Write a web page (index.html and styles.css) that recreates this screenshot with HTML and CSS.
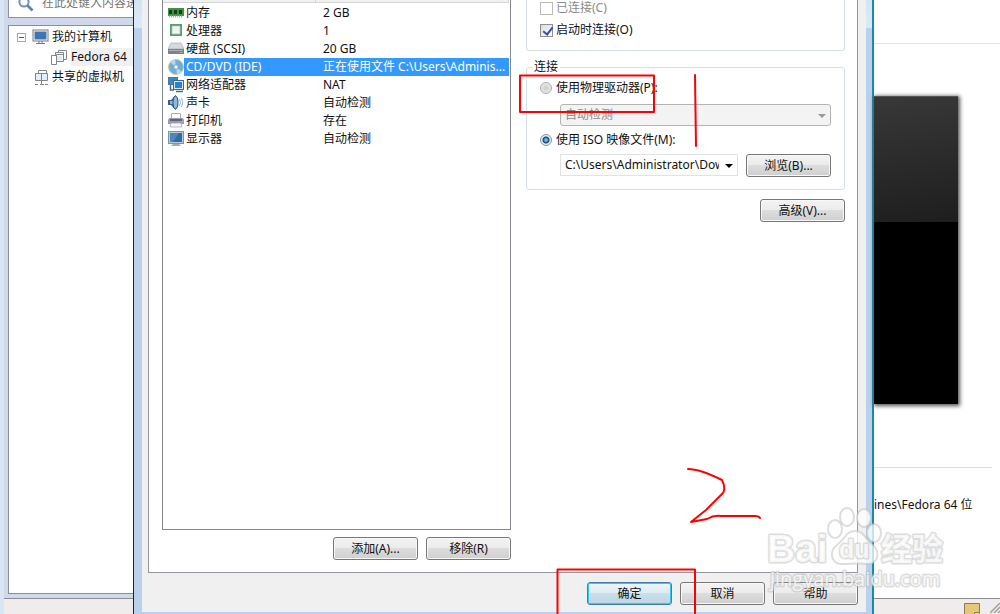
FILE: index.html
```html
<!DOCTYPE html>
<html lang="zh-CN">
<head>
<meta charset="utf-8">
<title>虚拟机设置</title>
<link rel="stylesheet" href="styles.css">
</head>
<body>
<div class="screen">
  <aside class="library">
    <div class="library-body">
      <label class="search">
        <svg width="16" height="16" viewBox="0 0 16 16"><circle cx="6" cy="5" r="4.6" fill="none" stroke="#6f94c4" stroke-width="2"/><path d="M9.500 8.500l5 5" stroke="#5b82b8" stroke-width="2.600"/></svg>
        <input type="text" placeholder="在此处键入内容进行搜索" aria-label="搜索">
      </label>
      <ul class="tree">
        <li class="node root">
          <svg width="9" height="9" viewBox="0 0 9 9"><rect x=".5" y=".5" width="8" height="8" fill="#fff" stroke="#a3a9b3"/><path d="M2 4.500h5" stroke="#3c5a96"/></svg>
          <svg width="17" height="16" viewBox="0 0 17 16"><rect x="1" y="1" width="15" height="11" fill="#fff" stroke="#777"/><rect x="2.500" y="2.500" width="12" height="8" fill="#3e76b5"/><path d="M7 12v2M10 12v2M4 14.500h9" stroke="#777" fill="none"/></svg>
          <span>我的计算机</span>
        </li>
        <li class="node child">
          <svg width="17" height="16" viewBox="0 0 17 16" fill="#fff" stroke="#858585"><path d="M7.500 1.500h8v9h-8z"/><path d="M4.500 3.500h8v9h-8z" fill="#f5f8fb"/><path d="M.5 6.500h5v9h-5z"/><path d="M5.500 12.500V5.500h7" fill="none"/><path d="M6 7h5v4H6z" fill="#dce9f6" stroke="none"/></svg>
          <span class="current">Fedora 64</span>
        </li>
        <li class="node shared">
          <svg width="15" height="17" viewBox="0 0 15 17" fill="#fff" stroke="#858585"><path d="M4.500 1.500h8v8h-8z"/><path d="M1.500 4.500h6v7h-6zM7.500 4.500h6v7h-6z" fill="#e6eff8"/><path d="M7.500 11v4M1 15.500h3M6 15.500h4M11 15.500h3" fill="none"/></svg>
          <span>共享的虚拟机</span>
        </li>
      </ul>
    </div>
    <div class="status"></div>
  </aside>

  <main class="dialog">
    <div class="dialog-face">
      <div class="page">
        <section class="devices">
          <div class="list">
            <div class="list-head"><i></i><i></i></div>
            <table>
              <tbody>
              <tr><td class="ico"><svg width="16" height="16" viewBox="0 0 16 16"><path d="M0 3h16v8H0z" fill="#3f9143"/><path d="M1 5h3v4H1zM6 5h3v4H6zM11 5h3v4h-3z" fill="#1c3b22"/><path d="M1 11.500h14" stroke="#c0b24d" stroke-width="2" stroke-dasharray="1 1"/></svg></td><td>内存</td><td>2 GB</td></tr>
              <tr><td class="ico"><svg width="16" height="16" viewBox="0 0 16 16"><rect x="2.500" y="1.500" width="11" height="11" fill="#238247" stroke="#55a071"/><rect x="4" y="3" width="8" height="8" fill="#f2f1f1" stroke="#ccd5cf"/></svg></td><td>处理器</td><td>1</td></tr>
              <tr><td class="ico"><svg width="16" height="16" viewBox="0 0 16 16"><path d="M3 2h10l3 6H0z" fill="#d6dadd" stroke="#999fa6" stroke-width=".6"/><path d="M0 8h16v5H0z" fill="#7b838c"/><path d="M1 9h14v1H1z" fill="#a9b1ba"/><path d="M12 11h2v1h-2z" fill="#7fe068"/></svg></td><td>硬盘 (SCSI)</td><td>20 GB</td></tr>
              <tr class="selected"><td class="ico"><svg width="16" height="16" viewBox="0 0 16 16"><circle cx="8" cy="8" r="7.500" fill="#73acd9" stroke="#b8d684"/><path d="M8 8L2 3a8 8 0 0 1 5-2.500zM8 8l6 5a8 8 0 0 1-5 2.500z" fill="#b4d8f0"/><circle cx="8" cy="8" r="2.300" fill="#dceaf3" stroke="#7ba9cf"/><circle cx="8" cy="8" r="1" fill="#fff"/></svg></td><td>CD/DVD (IDE)</td><td>正在使用文件 C:\Users\Adminis...</td></tr>
              <tr><td class="ico"><svg width="16" height="16" viewBox="0 0 16 16"><rect x=".5" y=".5" width="9" height="7" fill="#3789c8" stroke="#57758d"/><rect x="5.500" y="3.500" width="10" height="9" fill="#d9e5ef" stroke="#456783"/><rect x="7" y="5" width="7" height="6" fill="#2385d1"/><path d="M2.500 8v5H6M8 14.500h7" fill="none" stroke="#496d8c" stroke-width="1.500"/></svg></td><td>网络适配器</td><td>NAT</td></tr>
              <tr><td class="ico"><svg width="16" height="16" viewBox="0 0 16 16"><path d="M0 5h3l5-5v15l-5-5H0z" fill="#335f88"/><path d="M2 6h2l3-3v8l-3-2H2z" fill="#8bb9dd"/><ellipse cx="7.500" cy="7.500" rx="2.500" ry="6.500" fill="#8fbadb" stroke="#234d74"/><path d="M11.500 4q2 3.500 0 7M13.500 3q2.500 4.500 0 9" fill="none" stroke="#8bb6dc"/></svg></td><td>声卡</td><td>自动检测</td></tr>
              <tr><td class="ico"><svg width="16" height="16" viewBox="0 0 16 16"><path d="M3.500.5h9V6h-9z" fill="#fff" stroke="#aaa"/><path d="M1 5h14l1 2v4H0V7z" fill="#999daf"/><path d="M2 6h12v2H2z" fill="#60677d"/><path d="M3 10h10l1 4H2z" fill="#f7f7fc" stroke="#9b9fab" stroke-width=".7"/><path d="M13 8h2v1h-2z" fill="#7ee180"/></svg></td><td>打印机</td><td>存在</td></tr>
              <tr><td class="ico"><svg width="16" height="16" viewBox="0 0 16 16"><rect x=".5" y=".5" width="15" height="12" fill="#b9c9d6" stroke="#7d94a6"/><rect x="2" y="2" width="12" height="9" fill="#326ba6"/><path d="M2 2h9L5 11H2z" fill="#5088bb"/><path d="M5 13h6l2 2H3z" fill="#9aabb9"/></svg></td><td>显示器</td><td>自动检测</td></tr>
              </tbody>
            </table>
          </div>
          <div class="buttons">
            <button type="button">添加(A)...</button>
            <button type="button">移除(R)</button>
          </div>
        </section>

        <section class="settings">
          <div class="group state">
            <label class="option off"><input type="checkbox" disabled><span>已连接(C)</span></label>
            <label class="option"><input type="checkbox" checked><span>启动时连接(O)</span></label>
          </div>
          <fieldset class="group link">
            <legend>连接</legend>
            <label class="option"><input type="radio" name="source"><span>使用物理驱动器(P):</span></label>
            <div class="combo off"><select disabled aria-label="物理驱动器"><option>自动检测</option></select></div>
            <label class="option"><input type="radio" name="source" checked><span>使用 ISO 映像文件(M):</span></label>
            <div class="file">
              <div class="combo"><select aria-label="ISO 映像文件"><option>C:\Users\Administrator\Downloads</option></select></div>
              <button type="button">浏览(B)...</button>
            </div>
          </fieldset>
          <div class="advanced"><button type="button">高级(V)...</button></div>
        </section>
      </div>
      <footer class="actions">
        <button type="button" class="default">确定</button>
        <button type="button">取消</button>
        <button type="button">帮助</button>
      </footer>
    </div>
  </main>

  <section class="summary">
    <div class="summary-body">
      <div class="tabs-line"></div>
      <div class="preview"></div>
      <div class="details">ines\Fedora 64 位</div>
    </div>
    <div class="status">
      <svg width="16" height="16" viewBox="0 0 16 16"><path d="M.5.500h15v10l-5 5H.5z" fill="#e5c778" stroke="#8d7b4f"/><path d="M15.500 9.500h-5v6" fill="#f6e5ae" stroke="#8d7b4f"/></svg>
      <svg width="10" height="10" viewBox="0 0 10 10"><path d="M0 10L10 0M4 10l6-6M8 10l2-2" stroke="#999" stroke-width="1.300"/></svg>
    </div>
  </section>

  <svg class="marks" width="1000" height="614" viewBox="0 0 1000 614">
    <g class="brand">
      <text x="767" y="562" class="brand-latin">Bai</text>
      <ellipse cx="835" cy="529" rx="7" ry="9"/><ellipse cx="847" cy="517" rx="7" ry="9"/><ellipse cx="864" cy="518" rx="7" ry="9"/><ellipse cx="874" cy="533" rx="7" ry="9"/>
      <path d="M855 531c-9 0-10 8-17 13-10 7-7 20 4 20 8 0 18-1 26 0 10 0 13-13 4-20-7-5-8-13-17-13z"/>
      <text x="839" y="558" class="brand-paw">du</text>
      <text x="881" y="560" class="brand-han">经验</text>
      <text x="770" y="586" class="brand-site">jingyan.baidu.com</text>
    </g>
    <g class="pen">
      <path d="M520 75.500H654V112H520z"/>
      <path d="M695 75l1 71"/>
      <path d="M557.500 620V569.500H695V620"/>
      <path d="M688 469q12 0 34 11q4 8 1 13l-17 17-15 12 16-3q7-4 14-3h34q4 0 5 2"/>
    </g>
  </svg>
</div>
</body>
</html>
```
FILE: styles.css
```css
* { box-sizing: border-box; }

body {
  margin: 0;
  font: 12px/18px "Noto Sans", "Noto Sans CJK SC", sans-serif;
  color: #111;
  background: #fff;
}

button, input, select { font: inherit; color: inherit; margin: 0; }

.screen {
  display: grid;
  grid-template-columns: 133px minmax(0, 1fr) 126px;
  height: 100vh;
  position: relative;
  overflow: hidden;
}

/* Library column */
.library {
  display: flex;
  flex-direction: column;
  border-left: 4px solid #d8e5f3;
  overflow: hidden;
}
.library-body {
  flex: 1;
  display: flex;
  flex-direction: column;
  gap: 7px;
  padding: 0 0 4px 4px;
  background: #d0d9ec;
}
.search {
  display: flex;
  align-items: flex-start;
  gap: 8px;
  height: 18px;
  padding-left: 9px;
  background: #fff;
  border: 1px solid #8c93a1;
  border-width: 0 0 1px 1px;
  overflow: hidden;
}
.search svg { flex: none; margin-top: -3px; }
.search input {
  min-width: 0;
  height: 18px;
  margin-top: -6px;
  padding: 0;
  border: 0;
  background: none;
}
.search input::placeholder { color: #777; }
.tree {
  flex: 1;
  margin: 0;
  padding: 1px 0 0;
  list-style: none;
  background: #fff;
  border: 1px solid #878e9b;
  border-right: 0;
}
.node { display: flex; align-items: center; height: 20px; gap: 3px; white-space: nowrap; }
.node svg { flex: none; }
.root { padding-left: 8px; }
.root svg:first-child { margin-right: 3px; }
.child { padding-left: 42px; }
.shared { padding-left: 25px; }
.current { flex: 1; background: #f0f0f0; }
.status {
  flex: none;
  height: 16px;
  border-top: 1px solid #8c8c90;
  background: #f0eceb;
}

/* Dialog window */
.dialog {
  display: flex;
  padding: 0 6px 2px 8px;
  background: linear-gradient(#d5e4f4, #dbe9f7) top / 100% 28px no-repeat #b9d1ea;
  border-left: 1px solid #222;
  border-right: 2px solid #168caa;
  min-width: 0;
}
.dialog-face {
  flex: 1;
  display: flex;
  flex-direction: column;
  padding: 0 8px 0 6px;
  background: #f0f0f0;
  min-width: 0;
}
.page {
  flex: 1;
  display: grid;
  grid-template-columns: 349px minmax(0, 1fr);
  gap: 15px;
  padding: 0 12px 12px 13px;
  background: #fff;
  border: 1px solid #9497a0;
  border-top: 0;
}
.devices { display: flex; flex-direction: column; gap: 7px; }
.list { flex: 1; border: 1px solid #828790; border-top: 0; padding-right: 1px; }
.list-head {
  display: grid;
  grid-template-columns: 153px 1fr;
  height: 3px;
  background: #f1f1f1;
  border-bottom: 1px solid #d5d5d5;
}
.list-head i { border-right: 1px solid #d5d5d5; }
.list table { width: 100%; margin-top: 1px; border-collapse: collapse; table-layout: fixed; }
.list td { height: 18px; padding: 0 0 0 1px; white-space: nowrap; }
.list td:nth-child(2) { width: 138px; padding-left: 2px; }
.list .ico { width: 21px; padding: 0 0 0 5px; background: #fff; }
.ico svg { display: block; }
.selected { background: #3399ff; color: #fff; }

.buttons, .actions { display: flex; justify-content: flex-end; gap: 8px; }
button {
  width: 85px;
  height: 23px;
  padding: 0;
  border: 1px solid #777;
  border-radius: 3px;
  background: linear-gradient(#f3f3f3, #ebebeb 50%, #dddddd 50%, #cfcfcf);
  box-shadow: inset 0 0 0 1px #f8f8f8;
}
.default {
  border-color: #3c7fb1;
  background: linear-gradient(#edf5fa, #dcebf3 50%, #c9dfeb 50%, #bcd6e4);
  box-shadow: inset 0 0 0 1px #35c7f2;
}
.actions { flex: none; height: 39px; padding-top: 9px; }

/* Device settings */
.settings { display: flex; flex-direction: column; }
.group {
  min-width: 0;
  margin: 0;
  border: 1px solid #d5dfe9;
  border-radius: 3px;
}
.state {
  height: 51px;
  border-top: 0;
  border-radius: 0 0 3px 3px;
  padding-left: 13px;
  display: flex;
  flex-direction: column;
  gap: 4px;
}
.state .option:first-child { margin-top: -1px; }
.link {
  display: flex;
  flex-direction: column;
  gap: 5px;
  margin-top: 7px;
  padding: 3px 13px 12px;
}
.link legend { margin-left: -8px; padding: 0 2px; }
.option { display: flex; align-items: center; gap: 3px; height: 18px; }
.option.off { color: #8a8a8a; }
.option input { appearance: none; flex: none; width: 13px; height: 13px; border: 1px solid #8e8f8f; background: #f4f4f4; }
.option.off input { border-color: #b9b9b9; background: #fff; }
.option input[type="checkbox"]:checked {
  background: linear-gradient(135deg, #d5dce5, #fff);
}
.option input[type="checkbox"]:checked::after {
  content: "";
  display: block;
  width: 4px;
  height: 8px;
  margin: 0 0 0 4px;
  border: solid #3a4fa0;
  border-width: 0 2px 2px 0;
  transform: rotate(38deg);
}
.option input[type="radio"] { width: 12px; height: 12px; margin-right: 1px; border-color: #aaa; border-radius: 50%; background: radial-gradient(#ccc, #f4f4f4); }
.option input[type="radio"]:checked { background: radial-gradient(circle, #5fc3e6 0 1px, #173f6d 3px, #173f6d 3px, #e8eef2 4px); border-color: #8794a0; }

.combo { position: relative; margin-left: 20px; height: 22px; flex: none; }
.combo select {
  appearance: none;
  display: block;
  width: 100%;
  height: 100%;
  padding: 0 18px 0 4px;
  border: 1px solid #dfe3e8;
  background: #fff;
}
.combo::after {
  content: "";
  position: absolute;
  right: 5px;
  top: 10px;
  border: 4px solid transparent;
  border-top-color: #000;
  border-bottom: 0;
}
.combo.off { margin-top: 2px; }
.combo.off select { border-color: #b4b4b4; border-radius: 3px; background: #f3f3f3; color: #8a8a8a; opacity: 1; }
.combo.off::after { border-top-color: #999; }
.file { display: flex; gap: 8px; }
.file .combo { flex: 1; min-width: 0; }
.advanced { display: flex; justify-content: flex-end; margin-top: 9px; }

/* Machine summary */
.summary { display: flex; flex-direction: column; min-width: 0; }
.summary-body { flex: 1; }
.tabs-line { height: 44px; border-bottom: 1px solid #dbe5f3; }
.preview {
  height: 308px;
  margin: 52px 42px 0 0;
  background: linear-gradient(172deg, #383838, #1e1e1e) top / 100% 125px no-repeat #000;
  border-top: 1px solid #555;
  box-shadow: 1px 1px 4px 1px #555;
}
.details {
  margin: 63px 8px 0 0;
  padding-top: 28px;
  border-top: 1px solid #dedede;
  white-space: nowrap;
}
.summary .status { display: flex; justify-content: flex-end; gap: 10px; padding-top: 4px; overflow: hidden; }
.summary .status svg { flex: none; }

/* Pen strokes and brand stamp above the windows */
.marks { position: absolute; left: 0; top: 0; pointer-events: none; }
.pen { fill: none; stroke: #f00; stroke-width: 2; stroke-linecap: round; stroke-linejoin: round; }
.brand { fill: #fff; fill-opacity: .75; stroke: #bbb; stroke-opacity: .5; stroke-width: 2; }
.brand text { paint-order: stroke; stroke-width: 3; stroke-linejoin: round; }
.brand-latin { font: bold 39px "Liberation Sans", sans-serif; }
.brand-paw { font: bold 25px "Liberation Sans", sans-serif; }
.brand-han { font: bold 31px "Noto Sans CJK SC", sans-serif; }
.brand-site { font: 20px "Open Sans", sans-serif; }
```
